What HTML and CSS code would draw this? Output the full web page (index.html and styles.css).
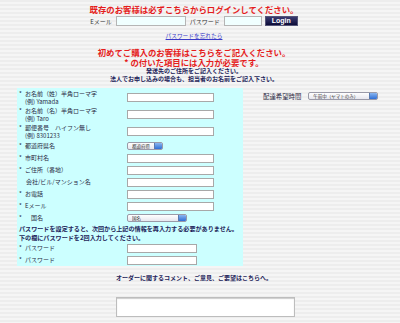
FILE: index.html
```html
<!DOCTYPE html>
<html lang="ja">
<head>
<meta charset="utf-8">
<title>ご注文フォーム</title>
<link rel="stylesheet" href="styles.css">
</head>
<body>
<div id="wrap">
	<p class="red first">既存のお客様は必ずこちらからログインしてください。</p>

	<form id="login">
		<label>Eメール</label>
		<input type="text" class="mail">
		<label>パスワード</label>
		<input type="password" class="pass">
		<button type="button">Login</button>
	</form>
	<p class="forgot"><a href="#">パスワードを忘れたら</a></p>

	<p class="red second">初めてご購入のお客様はこちらをご記入ください。</p>
	<p class="red">* の付いた項目には入力が必要です。</p>
	<p class="note">発送先のご住所をご記入ください。</p>
	<p class="note">法人でお申し込みの場合も、担当者のお名前をご記入下さい。</p>

	<div id="main">
		<div id="panel">
			<div class="row tall">
				<div class="label"><span class="star">*</span>お名前（姓）半角ローマ字<br><span class="ex">(例) Yamada</span></div>
				<input type="text">
			</div>
			<div class="row tall">
				<div class="label"><span class="star">*</span>お名前（名）半角ローマ字<br><span class="ex">(例) Taro</span></div>
				<input type="text">
			</div>
			<div class="row tall">
				<div class="label"><span class="star">*</span>郵便番号　ハイフン無し<br><span class="ex">(例) 8301233</span></div>
				<input type="text">
			</div>
			<div class="row">
				<div class="label"><span class="star">*</span>都道府県名</div>
				<span class="sel pref"><select><option>都道府県</option></select><span class="knob"></span></span>
			</div>
			<div class="row">
				<div class="label"><span class="star">*</span>市町村名</div>
				<input type="text">
			</div>
			<div class="row">
				<div class="label"><span class="star">*</span>ご住所（番地）</div>
				<input type="text">
			</div>
			<div class="row">
				<div class="label plain">会社/ビル/マンション名</div>
				<input type="text">
			</div>
			<div class="row">
				<div class="label"><span class="star">*</span>お電話</div>
				<input type="text">
			</div>
			<div class="row">
				<div class="label"><span class="star">*</span>Eメール</div>
				<input type="text">
			</div>
			<div class="row">
				<div class="label"><span class="star">*</span><span class="gap"></span>国名</div>
				<span class="sel country"><select><option>国名</option></select><span class="knob"></span></span>
			</div>
			<p class="pwnote">パスワードを設定すると、次回から上記の情報を再入力する必要がありません。<br>下の欄にパスワードを2回入力してください。</p>
			<div class="row">
				<div class="label"><span class="star">*</span>パスワード</div>
				<input type="password" class="short">
			</div>
			<div class="row">
				<div class="label"><span class="star">*</span>パスワード</div>
				<input type="password" class="short">
			</div>
		</div>

		<div id="side">
			<label>配達希望時間</label>
			<span class="sel time"><select><option>午前中（ヤマトのみ）</option></select><span class="knob"></span></span>
		</div>
	</div>

	<p class="note comment">オーダーに関するコメント、ご意見、ご要望はこちらへ。</p>
	<div class="box"><textarea></textarea></div>
</div>
</body>
</html>
```

FILE: styles.css
```css
body {
	margin: 0;
	background: repeating-linear-gradient(#ededed 0 2px, #f5f5f5 2px 4px);
	font-family: "Noto Sans CJK JP", "Liberation Sans", sans-serif;
	color: #22224a;
}
p {
	margin: 0;
	text-align: center;
}
#wrap {
	width: 388px;
	height: 323px;
	overflow: hidden;
}

.red {
	color: #e51d1d;
	font-weight: bold;
	font-size: 8.4px;
	line-height: 10px;
}
.first {
	padding-top: 4px;
}
.second {
	margin-top: 7px;
}
.note {
	color: #1e1e5a;
	font-weight: bold;
	font-size: 6px;
	line-height: 8px;
}

#login {
	display: flex;
	justify-content: center;
	align-items: center;
	height: 10px;
	margin: 2px 0 0;
	font-size: 6px;
	color: #333;
}
#login label {
	margin-right: 4px;
}
#login input {
	box-sizing: border-box;
	height: 10px;
	padding: 0;
	border: 1px solid #b5b5b5;
	background: #f0ffff;
	margin-right: 4px;
}
#login .mail { width: 70px; }
#login .pass { width: 38px; margin-right: 3px; }
#login button {
	box-sizing: border-box;
	width: 33px;
	height: 10px;
	padding: 0;
	border: 1px solid #555577;
	background: linear-gradient(#3a3a70, #0c0c38);
	color: #fff;
	font-family: "Liberation Sans", sans-serif;
	font-weight: bold;
	font-size: 7px;
	line-height: 8px;
}

.forgot {
	margin-top: 6px;
	font-size: 5.7px;
	line-height: 8px;
}
.forgot a {
	color: #3a3ac8;
}

#main {
	display: flex;
	align-items: flex-start;
	margin-top: 5px;
}
#panel {
	width: 226px;
	margin-left: 17px;
	padding: 1px 0 0 2px;
	box-sizing: border-box;
	background: #ccffff;
	height: 178px;
}
.row {
	display: flex;
	align-items: center;
	height: 12px;
}
.row.tall {
	height: 17px;
}
.label {
	width: 108px;
	font-size: 6px;
	line-height: 8px;
	color: #2a2a44;
	white-space: nowrap;
}
.label.plain {
	padding-left: 7px;
	box-sizing: border-box;
}
.star {
	display: inline-block;
	width: 6px;
}
.gap {
	display: inline-block;
	width: 6px;
}
.ex {
	padding-left: 6px;
}
.row input {
	box-sizing: border-box;
	width: 87px;
	height: 9px;
	padding: 0;
	border: 1px solid #a8a8a8;
	background: #fff;
}
.row input.short {
	width: 70px;
}
.pwnote {
	text-align: left;
	height: 18px;
	display: flex;
	flex-direction: column;
	justify-content: center;
	color: #1e1e5a;
	font-weight: bold;
	font-size: 6.1px;
	line-height: 9px;
	white-space: nowrap;
}

.sel {
	display: inline-flex;
	box-sizing: border-box;
	height: 8px;
	border: 1px solid #9a9aa8;
	border-radius: 2px;
	background: linear-gradient(#ffffff, #e6e6ee);
	overflow: hidden;
}
.sel select {
	appearance: none;
	-webkit-appearance: none;
	flex: 1;
	min-width: 0;
	border: 0;
	padding: 0 0 0 4px;
	margin: 0;
	background: transparent;
	font-family: inherit;
	font-size: 4.5px;
	line-height: 6px;
	height: 6px;
	color: #333;
}
.knob {
	width: 7px;
	background: linear-gradient(#8ab6f0, #2f6fd6);
	border-left: 1px solid #5a7ab0;
}
.pref { width: 36px; }
.country { width: 60px; }
.time { width: 70px; height: 8px; }

#side {
	display: flex;
	align-items: center;
	margin-left: 20px;
	margin-top: 4px;
	height: 8px;
	font-size: 6.4px;
	color: #2a2a44;
}
#side label {
	margin-right: 7px;
}

.comment {
	margin-top: 8px;
}
.box {
	text-align: center;
	margin-top: 15px;
}
.box textarea {
	box-sizing: border-box;
	width: 179px;
	height: 20px;
	margin-left: 22px;
	padding: 0;
	border: 1px solid #bdbdbd;
	box-shadow: inset 0 1px 1px #ccc;
	background: #fff;
	resize: none;
	display: inline-block;
	vertical-align: top;
}
```
